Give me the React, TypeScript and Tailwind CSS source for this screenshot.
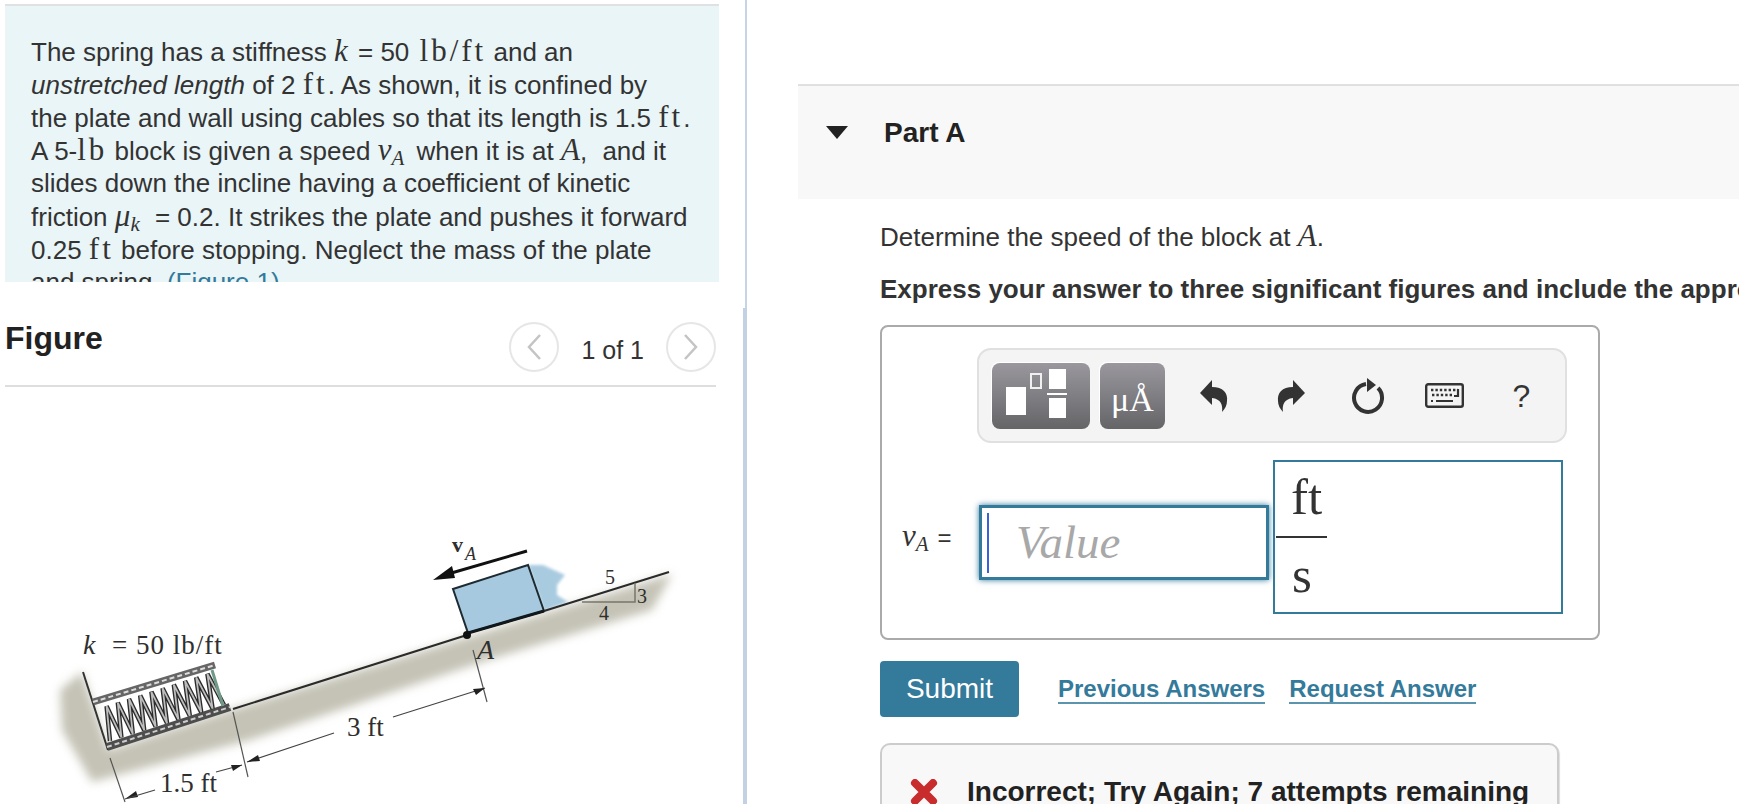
import React from "react";

const serif = "font-['Liberation_Serif',serif]";

function M({ children }: { children: React.ReactNode }) {
  return <span className={`${serif} text-[31px] leading-none tracking-[3px]`}>{children}</span>;
}
function I({ children }: { children: React.ReactNode }) {
  return <span className={`${serif} italic text-[31px] leading-none`}>{children}</span>;
}
function Sub({ children }: { children: React.ReactNode }) {
  return <span className={`${serif} italic text-[21px] leading-none align-[-5px] mr-[5px]`}>{children}</span>;
}
function Line({ children }: { children: React.ReactNode }) {
  return <div className="h-[33px] leading-[33px]">{children}</div>;
}

function Chevron({ dir }: { dir: "l" | "r" }) {
  return (
    <div className="w-[50px] h-[50px] rounded-full border-2 border-[#e6e6e6] flex items-center justify-center">
      <svg width="16" height="30" viewBox="0 0 16 30" fill="none" stroke="#c4c4c4" strokeWidth="2.5">
        {dir === "l" ? <path d="M14 3 L3 15 L14 27" /> : <path d="M2 3 L13 15 L2 27" />}
      </svg>
    </div>
  );
}

function Figure() {
  const coil: string[] = [];
  for (let i = 0; i <= 20; i++) {
    const t = i / 20;
    const top = [101 + 112 * t, 708 - 36 * t];
    const bot = [110 + 114 * t, 741 - 36 * t];
    const p = i % 2 === 0 ? bot : top;
    coil.push(`${p[0].toFixed(1)},${p[1].toFixed(1)}`);
  }
  const points = coil.join(" ");
  return (
    <svg className="block" width="745" height="417" viewBox="0 387 745 417">
      <defs>
        <filter id="soft" x="-10%" y="-30%" width="120%" height="160%">
          <feGaussianBlur stdDeviation="5" />
        </filter>
        <filter id="soft2" x="-20%" y="-20%" width="140%" height="140%">
          <feGaussianBlur stdDeviation="1.5" />
        </filter>
      </defs>
      <path d="M82 672 L60 690 L62 730 L92 782 L250 740 L488 660 L652 610 L672 574 L233 709 L108 750 Z" fill="#c5c3b6" filter="url(#soft)" />
      <path d="M528 565 L543 565 L565 575 L557 585 L557 595 L568 602 L544 611 Z" fill="#a9cbe0" filter="url(#soft2)" />
      <path d="M453 589 L528 565 L544 611 L468 633 Z" fill="#a6c9e0" stroke="#1d2a30" strokeWidth="2" />
      <path d="M468 633 L544 611" stroke="#10181c" strokeWidth="3" />
      <path d="M233 709 L467 635 M544 611 L669 572" stroke="#2a2a2a" strokeWidth="2" />
      <circle cx="467" cy="635" r="4" fill="#111" />
      <path d="M527 551 L448 574" stroke="#111" strokeWidth="3" />
      <path d="M433 580 L452 566 L455 578 Z" fill="#111" />
      <path d="M582 602 L635 602 L635 583" fill="none" stroke="#77756c" strokeWidth="1.5" />

      <path d="M83 672 L108 750" stroke="#333" strokeWidth="2" />
      <path d="M93 702 L215 665" stroke="#666" strokeWidth="7" />
      <path d="M93 702 L215 665" stroke="#ddd" strokeWidth="2" strokeDasharray="5 3" />
      <path d="M107 747 L230 707" stroke="#4d4d4d" strokeWidth="8" />
      <path d="M107 747 L230 707" stroke="#ccc" strokeWidth="2" strokeDasharray="5 3" />
      <polyline points={points} fill="none" stroke="#2b2b2b" strokeWidth="4.5" />
      <polyline points={points} fill="none" stroke="#bdbdbd" strokeWidth="1.8" />
      <path d="M212 670 L223 706" stroke="#6f9a88" strokeWidth="3" />

      <path d="M473 650 L487 702" stroke="#555" strokeWidth="1.2" />
      <path d="M233 712 L248 777" stroke="#555" strokeWidth="1.2" />
      <path d="M110 758 L125 802" stroke="#555" strokeWidth="1.2" />
      <path d="M485 688 L393 717 M334 733 L247 762" stroke="#444" strokeWidth="1.2" />
      <path d="M485 688 L473 689 L476 695 Z M247 762 L258 755 L260 761 Z" fill="#222" />
      <path d="M242 765 L216 772" stroke="#444" strokeWidth="1.2" />
      <path d="M242 765 L231 765 L233 771 Z M125 799 L136 791 L138 797 Z" fill="#222" />
      <path d="M125 799 L155 790" stroke="#444" strokeWidth="1.2" />

      <g fontFamily="'Liberation Serif', serif" fill="#2f2f2f">
        <text x="83" y="654" fontSize="28" fontStyle="italic">k</text>
        <text x="112" y="654" fontSize="27" letterSpacing="1">= 50 lb/ft</text>
        <text x="347" y="736" fontSize="27">3 ft</text>
        <text x="160" y="792" fontSize="27">1.5 ft</text>
        <text x="477" y="659" fontSize="28" fontStyle="italic">A</text>
        <text x="605" y="584" fontSize="20">5</text>
        <text x="637" y="603" fontSize="20">3</text>
        <text x="599" y="620" fontSize="20">4</text>
        <text x="452" y="552" fontSize="22" fontWeight="700">v</text>
        <text x="465" y="560" fontSize="18" fontStyle="italic">A</text>
      </g>
    </svg>
  );
}

export default function App() {
  return (
    <div className="flex h-screen overflow-hidden bg-white text-[#333] font-['Liberation_Sans',sans-serif] text-[26px]">
      <div className="w-[743px] shrink-0 pl-[5px] pt-[4px]">
        <div className="w-[714px] h-[278px] border-t-2 border-[#dfe1e2] bg-[#e9f5f7] pl-[26px] pt-[29px] overflow-hidden whitespace-nowrap">
          <Line>The spring has a stiffness <span className="mr-[3px]"><I>k</I></span> = 50 <span className="ml-[3px]"><M>lb/ft</M></span> and an</Line>
          <Line><em>unstretched length</em> of 2 <M>ft</M>. As shown, it is confined by</Line>
          <Line>the plate and wall using cables so that its length is 1.5 <M>ft</M>.</Line>
          <Line>A 5-<M>lb</M> block is given a speed <I>v</I><Sub>A</Sub> when it is at <I>A</I><span className="mr-[8px]">,</span> and it</Line>
          <Line>slides down the incline having a coefficient of kinetic</Line>
          <Line>friction <span className="mr-[3px]"><I>μ</I><Sub>k</Sub></span> = 0.2. It strikes the plate and pushes it forward</Line>
          <Line>0.25 <M>ft</M> before stopping. Neglect the mass of the plate</Line>
          <Line>and spring. <span className="text-[#347a9b]">(Figure 1)</span></Line>
        </div>
        <div className="w-[711px] h-[105px] border-b-2 border-[#dedede] flex items-start">
          <div className="text-[32px] font-bold text-[#222] leading-[36px] mt-[38px]">Figure</div>
          <div className="ml-auto mt-[40px] flex items-center text-[25px]">
            <Chevron dir="l" />
            <span className="mx-[22px] mt-[8px]">1 of 1</span>
            <Chevron dir="r" />
          </div>
        </div>
        <div className="-ml-[5px]">
          <Figure />
        </div>
      </div>

      <div className="shrink-0 w-[4px] flex flex-col">
        <div className="h-[308px] ml-[2px] w-[2px] bg-[#c8d4e4]" />
        <div className="flex-1 bg-[#c4d1e3]" />
      </div>

      <div className="flex-1 min-w-0 pl-[51px] pt-[84px] overflow-hidden">
        <div className="h-[115px] border-t-2 border-[#e0e0e0] bg-[#f8f8f8] flex items-start pt-[29px]">
          <svg className="ml-[28px] mt-[11px]" width="22" height="13" viewBox="0 0 22 13">
            <path d="M0 0 H22 L11 13 Z" fill="#222" />
          </svg>
          <div className="ml-[36px] mt-[1px] font-bold text-[28px] leading-[34px] text-[#222]">Part A</div>
        </div>
        <div className="ml-[82px]">
          <div className="mt-[19px] leading-[38px] whitespace-nowrap">
            Determine the speed of the block at <I>A</I>.
          </div>
          <div className="mt-[14px] leading-[38px] font-bold whitespace-nowrap">
            Express your answer to three significant figures and include the appropriate units.
          </div>

          <div className="mt-[17px] w-[720px] h-[315px] border-2 border-[#aaaaaa] rounded-[8px] pt-[21px]">
            <div className="ml-[95px] w-[590px] h-[95px] border-2 border-[#e0e0e0] bg-[#f4f4f4] rounded-[14px] flex items-center pl-[13px]">
              <div className="w-[98px] h-[66px] rounded-[8px] bg-gradient-to-b from-[#9a989e] to-[#656568] shadow-[-1px_-1px_0_#fff]">
                <svg width="98" height="66" viewBox="0 0 98 66">
                  <rect x="14" y="24" width="20" height="28" fill="#fff" />
                  <rect x="39" y="11" width="10" height="14" fill="none" stroke="#f0f0f0" strokeWidth="2" />
                  <rect x="57" y="6" width="17" height="20" fill="#fff" />
                  <rect x="55" y="30" width="20" height="2" fill="#fff" />
                  <rect x="57" y="35" width="17" height="20" fill="#fff" />
                </svg>
              </div>
              <div className={`ml-[10px] w-[65px] h-[66px] rounded-[8px] bg-gradient-to-b from-[#9a989e] to-[#656568] shadow-[-1px_-1px_0_#fff] flex items-center justify-center text-white text-[34px] leading-none pt-[8px] ${serif}`}>
                μÅ
              </div>
              <div className="ml-[10px] w-[77px] flex justify-center">
                <svg width="30" height="33" viewBox="1200 378 30 33">
                  <path d="M1201 392 L1213 379 L1213 386 C1224 386 1229 392 1228 400 C1228 404 1226 408 1223 411 C1224 404 1222 398 1213 397 L1213 404 Z" fill="#333" />
                </svg>
              </div>
              <div className="w-[77px] flex justify-center">
                <svg width="30" height="33" viewBox="1200 378 30 33" className="-scale-x-100">
                  <path d="M1201 392 L1213 379 L1213 386 C1224 386 1229 392 1228 400 C1228 404 1226 408 1223 411 C1224 404 1222 398 1213 397 L1213 404 Z" fill="#333" />
                </svg>
              </div>
              <div className="w-[77px] flex justify-center">
                <svg width="34" height="38" viewBox="1351 376 34 38" fill="none">
                  <path d="M1378 387 A14 14 0 1 1 1366 383" stroke="#333" strokeWidth="4" />
                  <path d="M1367 377 L1376 384 L1367 391 Z" fill="#333" />
                </svg>
              </div>
              <div className="w-[77px] flex justify-center">
                <svg width="39" height="25" viewBox="0 0 39 25" fill="none">
                  <rect x="1.2" y="1.2" width="36.6" height="22.6" rx="2" stroke="#333" strokeWidth="2.4" />
                  <path d="M6 7 H33 M7 12 H29" stroke="#333" strokeWidth="2.4" strokeDasharray="2.4 2" />
                  <path d="M11 18 H28 M33 6 V13 H29 M6 18 H8" stroke="#333" strokeWidth="2.2" />
                </svg>
              </div>
              <div className="w-[77px] text-center text-[32px] text-[#333]">?</div>
            </div>

            <div className="mt-[17px] flex items-start">
              <div className="w-[97px] shrink-0 pl-[20px] mt-[56px] text-[24px] leading-[44px] whitespace-nowrap">
                <I>v</I><Sub>A</Sub><span className="ml-[4px]">=</span>
              </div>
              <div className="mt-[45px] w-[290px] h-[75px] border-[3px] border-[#347a9b] shadow-[0_0_6px_#347a9b] flex items-center pl-[5px]">
                <div className="w-[2px] h-[60px] bg-[#3a62d8]" />
                <span className={`ml-[27px] ${serif} italic text-[47px] text-[#a8a8a8] leading-none`}>Value</span>
              </div>
              <div className={`ml-[4px] w-[290px] h-[154px] border-2 border-[#347a9b] flex flex-col items-start ${serif} text-[#333] pl-[1px]`}>
                <div className="w-[51px] h-[81px] border-b-2 border-[#333] text-center text-[51px] leading-[70px] pl-[10px]">ft</div>
                <div className="w-[51px] text-center text-[51px] leading-[74px] pl-[1px]">s</div>
              </div>
            </div>
          </div>

          <div className="mt-[21px] flex items-center">
            <div className="w-[139px] h-[56px] bg-[#347a9b] rounded-[4px] text-white text-[28px] flex items-center justify-center">Submit</div>
            <span className="ml-[39px] font-bold text-[24px] text-[#347a9b] border-b-2 border-[#5a94ae] leading-[27px]">Previous Answers</span>
            <span className="ml-[24px] font-bold text-[24px] text-[#347a9b] border-b-2 border-[#5a94ae] leading-[27px]">Request Answer</span>
          </div>

          <div className="mt-[26px] w-[679px] h-[120px] border-2 border-[#cccccc] rounded-[10px] bg-[#f8f8f8] shadow-[1px_1px_1px_#ddd] flex items-start pt-[34px] pl-[28px]">
            <svg className="shrink-0" width="28" height="26" viewBox="0 0 28 26">
              <path d="M5 4 L23 22 M23 4 L5 22" stroke="#c92c2c" strokeWidth="8" strokeLinecap="round" />
            </svg>
            <div className="ml-[29px] -mt-[4px] font-bold text-[28px] leading-[34px] text-[#222] whitespace-nowrap">Incorrect; Try Again; 7 attempts remaining</div>
          </div>
        </div>
      </div>
    </div>
  );
}
